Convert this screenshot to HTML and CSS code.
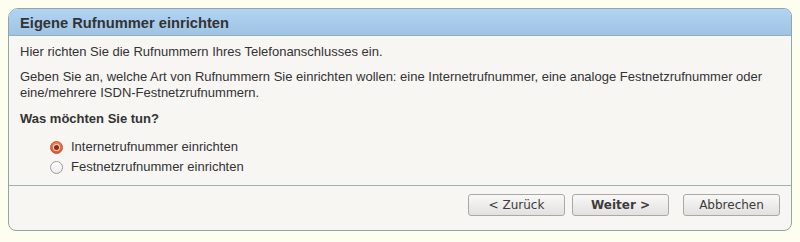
FILE: index.html
```html
<!DOCTYPE html>
<html lang="de">
<head>
<meta charset="utf-8">
<title>Eigene Rufnummer einrichten</title>
<link rel="stylesheet" href="styles.css">
</head>
<body>
<div class="panel">
  <div class="panel-head">Eigene Rufnummer einrichten</div>
  <div class="panel-body">
    <p class="intro">Hier richten Sie die Rufnummern Ihres Telefonanschlusses ein.</p>
    <p class="desc">Geben Sie an, welche Art von Rufnummern Sie einrichten wollen: eine Internetrufnummer, eine analoge Festnetzrufnummer oder eine/mehrere ISDN-Festnetzrufnummern.</p>
    <p class="question">Was möchten Sie tun?</p>
    <div class="options">
      <label class="option"><span class="radio checked"></span>Internetrufnummer einrichten</label>
      <label class="option"><span class="radio"></span>Festnetzrufnummer einrichten</label>
    </div>
  </div>
  <div class="panel-foot">
    <button class="btn">&lt; Zurück</button>
    <button class="btn btn-primary">Weiter &gt;</button>
    <button class="btn btn-cancel">Abbrechen</button>
  </div>
</div>
</body>
</html>
```
FILE: styles.css
```css
html, body {
  margin: 0;
  padding: 0;
  background: #fefef0;
}
body {
  padding: 8px 8px 0 8px;
  font-family: "Liberation Sans", Arial, sans-serif;
  color: #333;
}
.panel {
  width: 784px;
  height: 223px;
  box-sizing: border-box;
  border: 1px solid #8ea8a4;
  border-radius: 10px 8px 8px 8px;
  background: #f7f6f3;
  overflow: hidden;
  display: flex;
  flex-direction: column;
}
.panel-head {
  height: 27px;
  box-sizing: border-box;
  border-bottom: 1px solid #8fb0c8;
  background: linear-gradient(#b1d4f4, #9fc3e3);
  padding: 5px 0 0 11px;
  font-size: 14.7px;
  font-weight: bold;
  color: #333;
  line-height: 18px;
}
.panel-body {
  padding: 8px 11px 0 11px;
  font-size: 13px;
  line-height: 16px;
  height: 150px;
  box-sizing: border-box;
  border-bottom: 1px solid #9fb2b2;
}
.panel-body p {
  margin: 0;
}
.intro { margin-bottom: 9px !important; }
.desc { margin-bottom: 10px !important; }
.question { font-weight: bold; }
.options {
  display: flex;
  flex-direction: column;
  gap: 4px;
  padding: 12px 0 0 30px;
}
.option {
  display: flex;
  align-items: center;
  gap: 8px;
  line-height: 16px;
}
.radio {
  width: 11px;
  height: 11px;
  border-radius: 50%;
  border: 1px solid #9a9a9a;
  background: linear-gradient(#ffffff, #ececec);
  display: inline-block;
  position: relative;
  flex: none;
}
.radio.checked {
  border-color: #c0532f;
  background: linear-gradient(#f07f5a, #dc5a33);
}
.radio.checked::after {
  content: "";
  position: absolute;
  left: 3px;
  top: 3px;
  width: 5px;
  height: 5px;
  border-radius: 50%;
  background: #8b2e14;
  box-shadow: 0 0 0 1px #fbd2c2;
}
.panel-foot {
  flex: 1;
  display: flex;
  justify-content: flex-end;
  align-items: flex-start;
  padding: 8px 11px 0 0;
  gap: 7px;
}
.btn {
  height: 22px;
  width: 97px;
  border: 1px solid #aaa9a6;
  border-radius: 3px;
  background: linear-gradient(#f8f8f7, #e2e1df);
  font-family: "DejaVu Sans", sans-serif;
  font-size: 12px;
  color: #3c3c3c;
  padding: 0;
  margin: 0;
}
.btn-primary { font-weight: bold; }
.btn-cancel { margin-left: 7px; }
```
